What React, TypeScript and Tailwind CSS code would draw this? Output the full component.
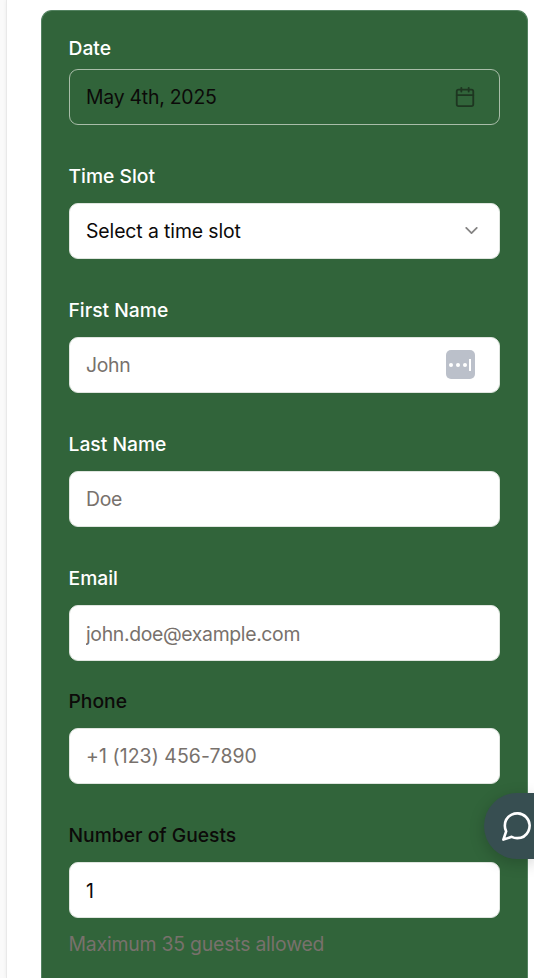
import { Calendar, ChevronDown } from "lucide-react";
import type { ReactNode } from "react";

type FieldProps = {
  label: string;
  id: string;
  className?: string;
  labelClass: string;
  children: ReactNode;
};

const control =
  "block h-14 w-full rounded-[9px] border border-[#dfe5df] bg-white pr-[17px] pl-[16.5px] text-[19.4px] text-[#0c0a09] outline-none placeholder:text-[#78716c] placeholder:opacity-100";

function Field({ label, id, className = "", labelClass, children }: FieldProps) {
  return (
    <div className={`flex flex-col ${className}`}>
      <label htmlFor={id} className={`h-5 text-[19.3px] leading-5 font-medium ${labelClass}`}>
        {label}
      </label>
      {children}
    </div>
  );
}

export default function App() {
  return (
    <div className="flex h-[978px] w-[534px] overflow-hidden bg-[#fafafa] font-['Inter','Liberation_Sans',sans-serif]">
      <main className="ml-1.5 flex-1 border-l border-[#e9e9e9] bg-white pt-2.5 pl-[33.5px] shadow-[0_0_4px_rgba(0,0,0,0.06)]">
        <form className="h-[980px] w-[487.5px] rounded-t-[11px] border border-b-0 border-[#538260] bg-[#31643a] px-[27px] pt-[27px]">
          <Field label="Date" id="date" labelClass="text-white">
            <button
              id="date"
              type="button"
              className="mt-[11px] flex h-14 w-full items-center justify-between rounded-[9px] border border-[#a9bda9] pt-px pr-[23px] pl-[16.5px] text-[19.4px] tracking-[-0.23px] text-[#0c0a09]"
            >
              <span className="pt-px">May 4th, 2025</span>
              <Calendar className="mb-[2px] size-[22px] opacity-50" strokeWidth={2} />
            </button>
          </Field>

          <Field label="Time Slot" id="time" labelClass="text-white" className="mt-[41px] gap-[17px]">
            <button
              id="time"
              type="button"
              className={`${control} flex! items-center justify-between pt-px pr-[17.5px]! tracking-[-0.1px]`}
            >
              <span className="pt-px">Select a time slot</span>
              <ChevronDown className="mb-[3px] size-[21px] opacity-50" strokeWidth={2} />
            </button>
          </Field>

          <Field label="First Name" id="first" labelClass="text-white" className="mt-[41px] gap-[17px]">
            <div className="relative">
              <input id="first" placeholder="John" className={`${control} tracking-[-0.3px]`} />
              <span className="absolute top-[13px] right-[25px] flex h-[29px] w-[29px] items-center gap-[3px] rounded-[5px] bg-[#bbc0ca] pl-[3px]">
                <i className="size-1 rounded-full bg-white" />
                <i className="size-1 rounded-full bg-white" />
                <i className="size-1 rounded-full bg-white" />
                <i className="-ml-px h-3 w-[1.5px] bg-white" />
              </span>
            </div>
          </Field>

          <Field label="Last Name" id="last" labelClass="text-white" className="mt-[41px] gap-[17px]">
            <input id="last" placeholder="Doe" className={`${control} tracking-[-0.3px]`} />
          </Field>

          <Field label="Email" id="email" labelClass="text-white" className="mt-[41px] gap-[17px]">
            <input
              id="email"
              placeholder="john.doe@example.com"
              className={`${control} pt-[2px] tracking-[-0.34px]`}
            />
          </Field>

          <Field label="Phone" id="phone" labelClass="text-[#0c0a09]" className="mt-[30px] gap-[17px]">
            <input id="phone" placeholder="+1 (123) 456-7890" className={`${control} tracking-[0.1px]`} />
          </Field>

          <Field label="Number of Guests" id="guests" labelClass="text-[#0c0a09]" className="mt-[41px] gap-[17px]">
            <input id="guests" defaultValue="1" className={`${control} pt-px`} />
          </Field>
          <p className="mt-4 text-[19.4px] leading-5 tracking-[-0.2px] text-[#78716c]">Maximum 35 guests allowed</p>
        </form>
      </main>

      <button
        type="button"
        aria-label="Open chat"
        className="absolute top-[793px] left-[484px] flex h-[66px] w-[50px] items-center rounded-l-[33px] bg-[#374e51] pl-[15px] text-white shadow-[0_4px_16px_rgba(0,0,0,0.2)]"
      >
        <svg
          viewBox="0 0 24 24"
          className="size-[35px] shrink-0"
          fill="none"
          stroke="currentColor"
          strokeWidth="1.8"
          strokeLinejoin="round"
        >
          <path d="M21 11.5a8.38 8.38 0 0 1-.9 3.8 8.5 8.5 0 0 1-7.6 4.7 8.38 8.38 0 0 1-3.8-.9L3 21l1.9-5.7a8.38 8.38 0 0 1-.9-3.8 8.5 8.5 0 0 1 4.7-7.6 8.38 8.38 0 0 1 3.8-.9h.5a8.48 8.48 0 0 1 8 8v.5z" />
        </svg>
      </button>
    </div>
  );
}
